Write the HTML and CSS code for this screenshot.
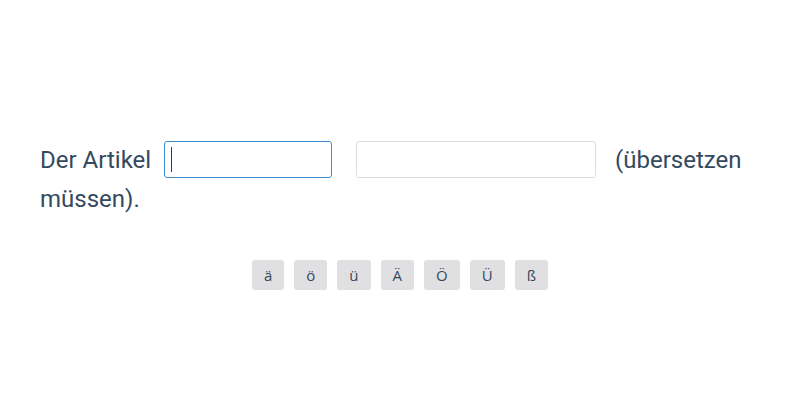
FILE: index.html
```html
<!DOCTYPE html>
<html lang="de">
<head>
<meta charset="utf-8">
<link rel="stylesheet" href="styles.css">
</head>
<body>
<main class="page">
  <p class="sentence">Der Artikel <span class="field-wrap"><input class="field field-active" type="text"><span class="caret"></span></span><input class="field field-wide" type="text"> (übersetzen müssen).</p>
  <div class="keys">
    <button class="key">ä</button>
    <button class="key">ö</button>
    <button class="key">ü</button>
    <button class="key">Ä</button>
    <button class="key">Ö</button>
    <button class="key">Ü</button>
    <button class="key">ß</button>
  </div>
</main>
</body>
</html>
```

FILE: styles.css
```css
html, body {
  margin: 0;
  padding: 0;
  background: #ffffff;
}
.page {
  padding: 141px 40px 0 40px;
  font-family: Roboto, "Liberation Sans", sans-serif;
  color: #34495e;
}
.sentence {
  margin: 0;
  font-size: 24px;
  line-height: 38px;
}
.field-wrap {
  position: relative;
  display: inline-block;
  vertical-align: middle;
  margin: 0 12px 0 7px;
  top: -2px;
}
.caret {
  position: absolute;
  left: 7px;
  top: 6px;
  width: 1px;
  height: 25px;
  background: #2c3e50;
}
.field {
  box-sizing: border-box;
  height: 37px;
  vertical-align: middle;
  border: 1px solid #dcdcdc;
  border-radius: 3px;
  padding: 0 6px;
  font-family: Roboto, sans-serif;
  font-size: 22px;
  color: #34495e;
  background: #fff;
  outline: none;
}
.field-active {
  display: block;
  width: 168px;
  border-color: #3d8fd1;
}
.field-wide {
  width: 240px;
  margin: 0 13px 0 12px;
  position: relative;
  top: -2px;
}
.keys {
  display: flex;
  justify-content: center;
  gap: 10px;
  margin-top: 42px;
}
.key {
  height: 30px;
  padding: 0 12px;
  border: none;
  border-radius: 3px;
  background: #e0e0e2;
  color: #34495e;
  font-family: "Open Sans", sans-serif;
  font-size: 15px;
}
```
